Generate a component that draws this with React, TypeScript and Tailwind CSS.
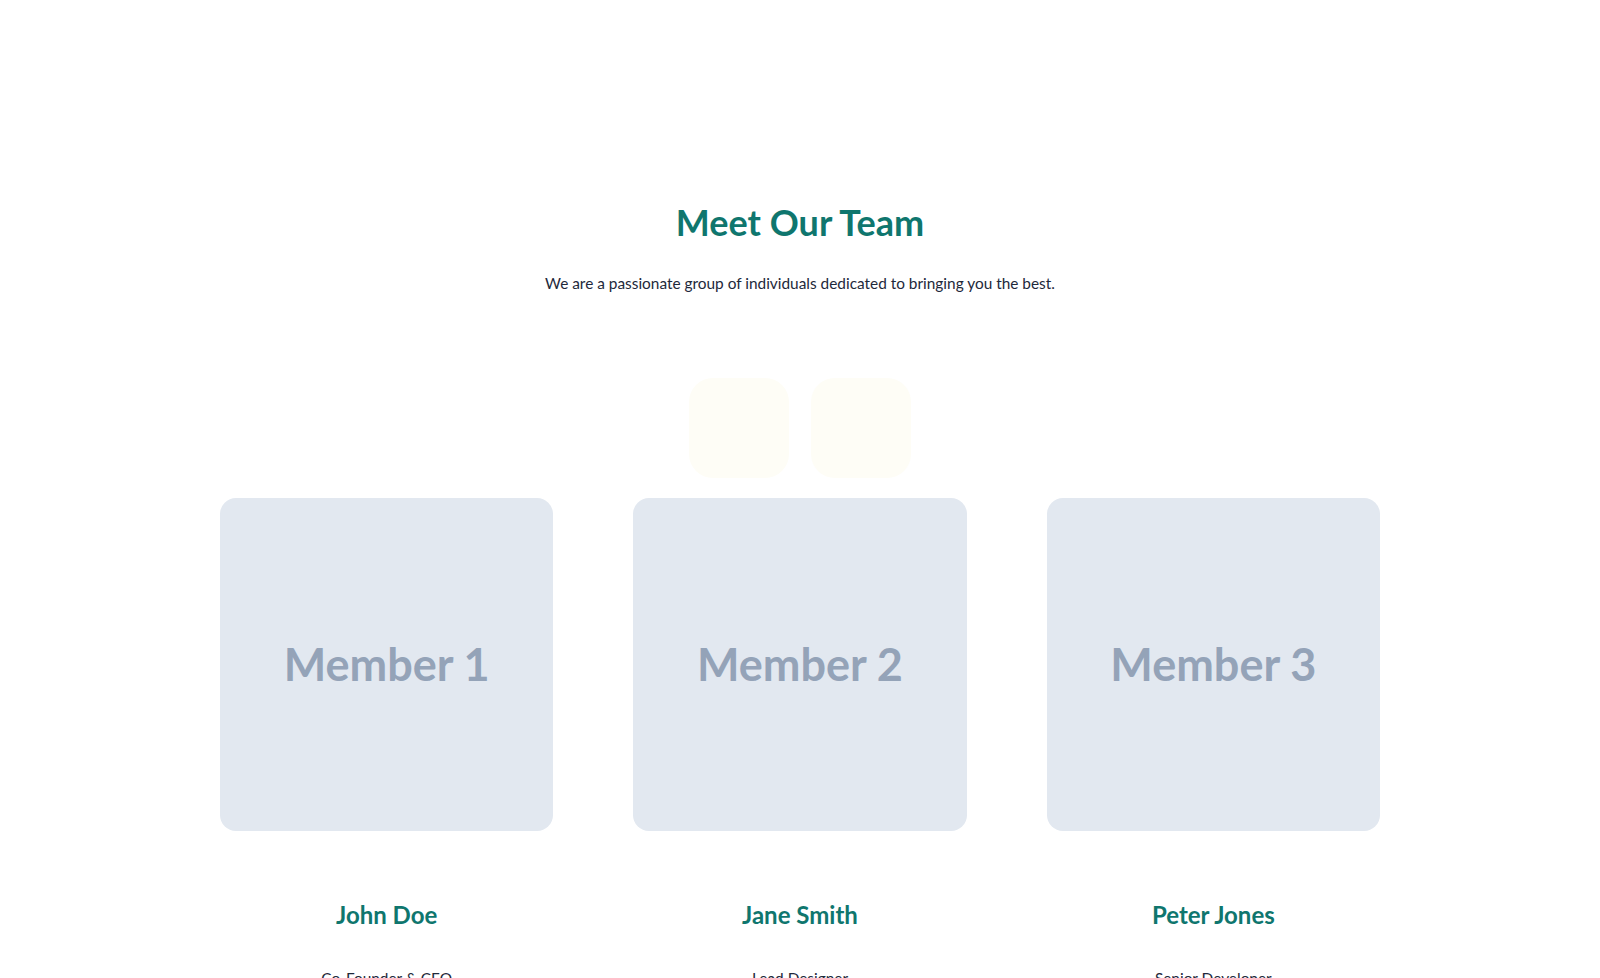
const members = [
  { label: "Member 1", name: "John Doe", role: "Co-Founder & CEO" },
  { label: "Member 2", name: "Jane Smith", role: "Lead Designer" },
  { label: "Member 3", name: "Peter Jones", role: "Senior Developer" },
];

export default function App() {
  return (
    <div className="min-h-screen bg-white font-['Lato','Noto_Sans',sans-serif]">
      <section className="pt-[202px]">
        <h2 className="text-center text-4xl font-bold text-[#0f766e]">Meet Our Team</h2>
        <p className="mt-[29px] text-center text-[15.4px] leading-6 text-[#1e293b]">
          We are a passionate group of individuals dedicated to bringing you the best.
        </p>

        {/* decorative tiles above the grid */}
        <div className="mt-[83px] flex justify-center gap-[22px]">
          <div className="h-[100px] w-[100px] rounded-3xl bg-[#fefdf6]" />
          <div className="h-[100px] w-[100px] rounded-3xl bg-[#fefdf6]" />
        </div>

        <div className="mx-auto mt-[20px] grid w-[1160px] grid-cols-3 gap-20">
          {members.map((m) => (
            <div key={m.name} className="flex flex-col items-center">
              <div className="flex aspect-square w-full items-center justify-center rounded-2xl bg-[#e2e8f0]">
                <span className="text-[45px] font-bold text-[#94a3b8]">{m.label}</span>
              </div>
              <h3 className="mt-[68px] text-2xl font-bold text-[#0f766e]">{m.name}</h3>
              <p className="mt-[35px] text-[15.4px] leading-6 text-[#1e293b]">{m.role}</p>
            </div>
          ))}
        </div>
      </section>
    </div>
  );
}
